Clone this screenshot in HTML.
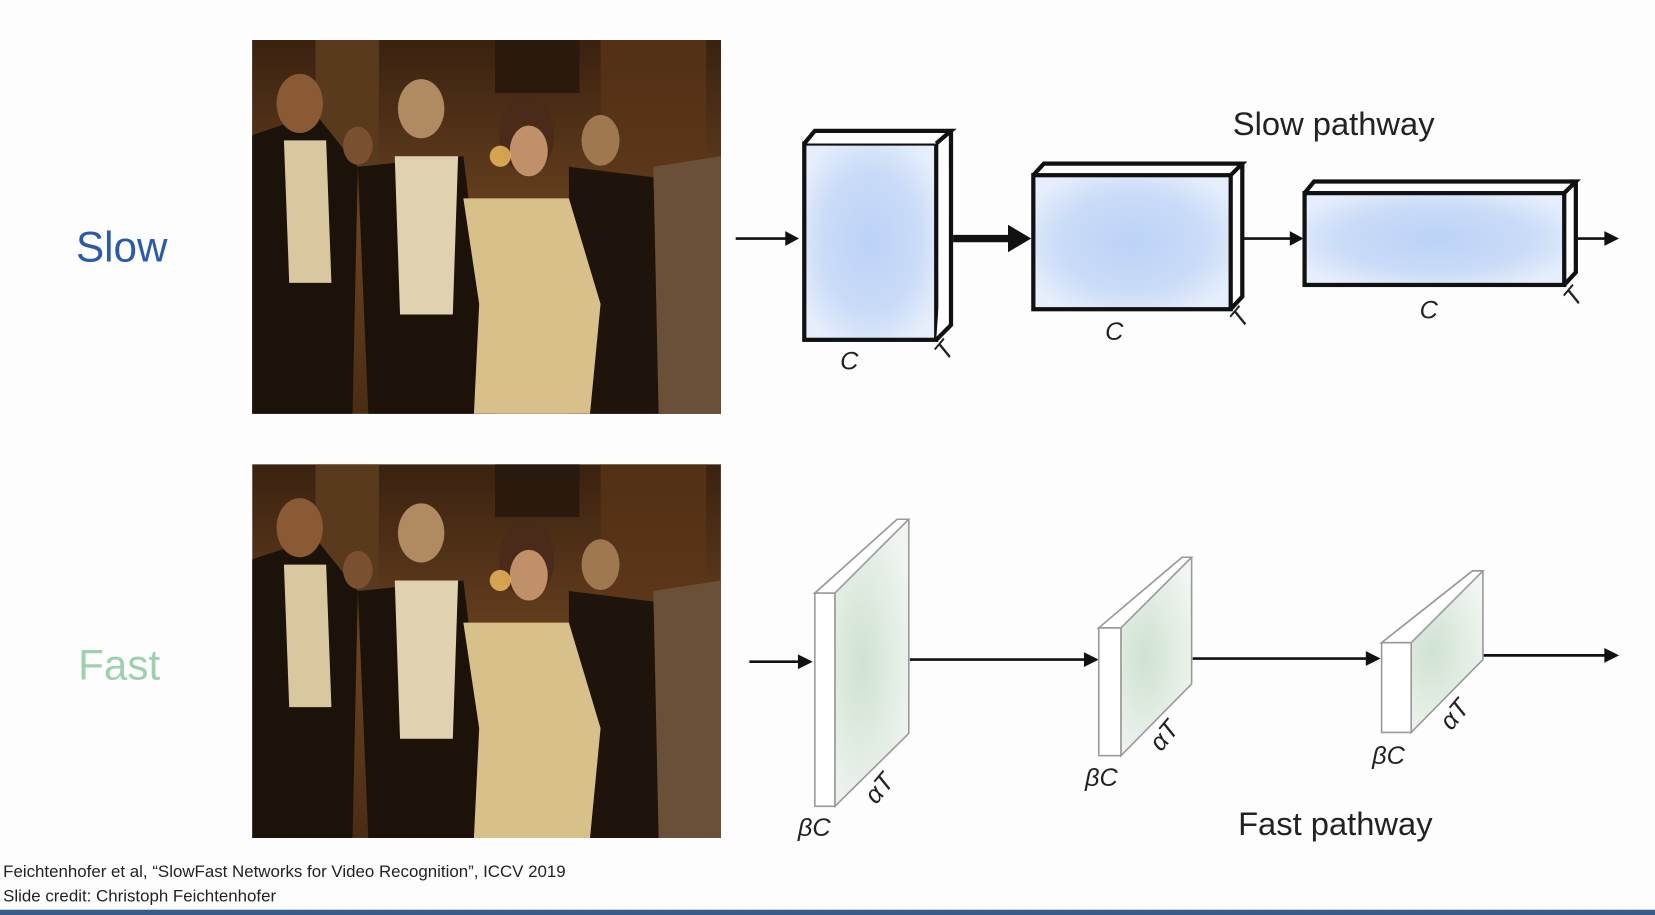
<!DOCTYPE html>
<html><head><meta charset="utf-8"><style>
html,body{margin:0;padding:0;background:#fdfdfd;width:1655px;height:915px;overflow:hidden}
svg{display:block}
</style></head><body>
<svg width="1655" height="915" viewBox="0 0 1568 867" preserveAspectRatio="none" xmlns="http://www.w3.org/2000/svg">
<defs>
<radialGradient id="bl" cx="0.5" cy="0.5" r="0.6"><stop offset="0" stop-color="#bcd2f7"/><stop offset="0.6" stop-color="#c9dbf7"/><stop offset="1" stop-color="#e6eefb"/></radialGradient>
<radialGradient id="gr" cx="0.5" cy="0.5" r="0.6"><stop offset="0" stop-color="#cfe2d2"/><stop offset="1" stop-color="#f1f5f1"/></radialGradient>
<linearGradient id="bg" x1="0" y1="0" x2="0" y2="1"><stop offset="0" stop-color="#3a2210"/><stop offset="0.5" stop-color="#6a4220"/><stop offset="1" stop-color="#4a2c14"/></linearGradient>
<g id="photo">
<rect x="0" y="0" width="444" height="354" fill="url(#bg)"/>
<rect x="60" y="0" width="60" height="130" fill="#5a3a1c"/>
<rect x="230" y="0" width="80" height="50" fill="#2a1a0e"/>
<rect x="330" y="0" width="100" height="300" fill="#5c3618" opacity="0.7"/>
<path d="M0 90 L60 70 L100 120 L95 354 L0 354Z" fill="#1b120a"/>
<ellipse cx="45" cy="60" rx="22" ry="28" fill="#8a5a34"/>
<path d="M30 95 L70 95 L75 230 L35 230Z" fill="#d9c7a0"/>
<path d="M100 120 L200 110 L230 354 L110 354Z" fill="#1c120a"/>
<ellipse cx="160" cy="65" rx="22" ry="28" fill="#b08a60"/>
<path d="M135 110 L195 110 L190 260 L140 260Z" fill="#e0d2b0"/>
<ellipse cx="100" cy="100" rx="14" ry="18" fill="#7a5030"/>
<path d="M300 120 L380 130 L390 354 L300 354Z" fill="#1e140c"/>
<ellipse cx="330" cy="95" rx="18" ry="24" fill="#a07850"/>
<path d="M380 120 L444 110 L444 354 L385 354Z" fill="#6a5038"/>
<path d="M200 150 L300 150 L330 250 L320 354 L210 354 L215 250Z" fill="#d8c08a"/>
<ellipse cx="260" cy="90" rx="26" ry="36" fill="#4a2a18"/>
<ellipse cx="262" cy="105" rx="18" ry="24" fill="#c09068"/>
<circle cx="235" cy="110" r="10" fill="#f4c060" opacity="0.8"/>
</g>
</defs>
<rect width="1568" height="867" fill="#fdfdfd"/>
<rect x="0" y="862" width="1568" height="5" fill="#3a5a8a"/>
<rect x="239" y="38" width="444" height="354" fill="#000"/>
<use href="#photo" x="239" y="38"/>
<use href="#photo" x="239" y="440"/>
<text x="72" y="248" font-family="Liberation Sans, sans-serif" font-size="40" fill="#2a5aa8">Slow</text>
<text x="74" y="644" font-family="Liberation Sans, sans-serif" font-size="40" fill="#9fd0ae">Fast</text>
<g font-family="Liberation Sans, sans-serif" fill="#222">
<text x="1168" y="128" font-size="31">Slow pathway</text>
<text x="1173" y="791" font-size="31">Fast pathway</text>
<g font-style="italic" font-size="24">
<text x="796" y="350">C</text><text x="1047" y="322">C</text><text x="1345" y="302">C</text>
<text x="896" y="343" transform="rotate(-50 896 343)">T</text>
<text x="1176" y="312" transform="rotate(-50 1176 312)">T</text>
<text x="1492" y="292" transform="rotate(-50 1492 292)">T</text>
<text x="756" y="792">βC</text><text x="1028" y="745">βC</text><text x="1300" y="724">βC</text>
<text x="830" y="763" transform="rotate(-50 830 763)">αT</text>
<text x="1100" y="713" transform="rotate(-50 1100 713)">αT</text>
<text x="1375" y="693" transform="rotate(-50 1375 693)">αT</text>
</g>
<text x="3" y="831" font-size="16">Feichtenhofer et al, “SlowFast Networks for Video Recognition”, ICCV 2019</text>
<text x="3" y="854" font-size="16">Slide credit: Christoph Feichtenhofer</text>
</g>
<g stroke="#111" fill="none">
<!-- slow boxes -->
<g stroke-width="4">
<rect x="762" y="136" width="125" height="186" fill="url(#bl)"/>
<path d="M762 136 L772 124 L901 124 L887 136 M887 322 L901 308 L901 124" fill="#fff"/>
<rect x="979" y="166" width="187" height="127" fill="url(#bl)"/>
<path d="M979 166 L989 155 L1177 155 L1166 166 M1166 293 L1177 281 L1177 155"/>
<rect x="1236" y="183" width="246" height="87" fill="url(#bl)"/>
<path d="M1236 183 L1245 172 L1493 172 L1482 183 M1482 270 L1493 258 L1493 172"/>
</g>
<g stroke-width="2.5">
<line x1="697" y1="226" x2="748" y2="226"/>
<line x1="903" y1="226" x2="960" y2="226" stroke-width="7"/>
<line x1="1178" y1="226" x2="1226" y2="226"/>
<line x1="1494" y1="226" x2="1525" y2="226"/>
<line x1="710" y1="627" x2="760" y2="627"/>
<line x1="862" y1="625" x2="1030" y2="625"/>
<line x1="1130" y1="624" x2="1298" y2="624"/>
<line x1="1405" y1="621" x2="1524" y2="621"/>
</g>
</g>
<g fill="#111">
<path d="M757 226 L744 219 L744 233Z"/>
<path d="M977 226 L955 213 L955 239Z"/>
<path d="M1235 226 L1222 219 L1222 233Z"/>
<path d="M1534 226 L1520 219 L1520 233Z"/>
<path d="M770 627 L756 620 L756 634Z"/>
<path d="M1041 625 L1027 618 L1027 632Z"/>
<path d="M1308 624 L1294 617 L1294 631Z"/>
<path d="M1534 621 L1520 614 L1520 628Z"/>
</g>
<!-- fast slabs -->
<g stroke="#999" stroke-width="1.5">
<path d="M772 562 L850 492 L861 492 L861 695 L791 764 L791 562Z" fill="url(#gr)"/>
<path d="M772 562 L850 492 L861 492 L791 562Z" fill="#fff"/>
<rect x="772" y="562" width="19" height="202" fill="#fff"/>
<path d="M1041 595 L1120 528 L1129 528 L1129 648 L1062 716 L1062 595Z" fill="url(#gr)"/>
<path d="M1041 595 L1120 528 L1129 528 L1062 595Z" fill="#fff"/>
<rect x="1041" y="595" width="21" height="121" fill="#fff"/>
<path d="M1309 609 L1395 541 L1405 541 L1405 625 L1337 694 L1337 609Z" fill="url(#gr)"/>
<path d="M1309 609 L1395 541 L1405 541 L1337 609Z" fill="#fff"/>
<rect x="1309" y="609" width="28" height="85" fill="#fff"/>
</g>
</svg>
</body></html>
